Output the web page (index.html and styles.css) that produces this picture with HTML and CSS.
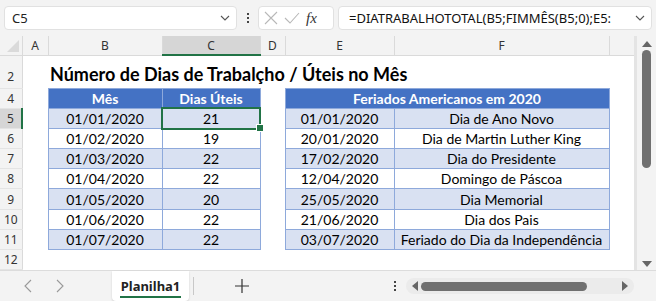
FILE: index.html
```html
<!DOCTYPE html>
<html lang="pt">
<head>
  <meta charset="UTF-8">
  <title>Planilha1</title>
  <link rel="stylesheet" href="styles.css">
</head>
<body>
  <div class="formula-bar">
    <div class="name-box">
      <span>C5</span>
      <svg class="chev" width="10" height="6" viewBox="0 0 10 6"><path d="M1 1l4 4 4-4" fill="none" stroke="#555" stroke-width="1.1"/></svg>
    </div>
    <div class="vdots"><i></i><i></i><i></i></div>
    <div class="fx-buttons">
      <svg width="14" height="14" viewBox="0 0 14 14"><path d="M1 1l12 12M13 1L1 13" stroke="#b8b8b8" stroke-width="1.1"/></svg>
      <svg width="16" height="14" viewBox="0 0 16 14"><path d="M1 7l5 5L15 2" fill="none" stroke="#b8b8b8" stroke-width="1.1"/></svg>
      <span class="fx">fx</span>
    </div>
    <div class="formula-box">
      <span>=DIATRABALHOTOTAL(B5;FIMMÊS(B5;0);E5:</span>
      <svg class="chev" width="10" height="6" viewBox="0 0 10 6"><path d="M1 1l4 4 4-4" fill="none" stroke="#555" stroke-width="1.1"/></svg>
    </div>
  </div>

  <div class="workspace">
    <table class="sheet">
      <colgroup>
        <col class="c-rh"><col class="c-a"><col class="c-b"><col class="c-c"><col class="c-d"><col class="c-e"><col class="c-f"><col>
      </colgroup>
      <tr class="col-heads">
        <th class="corner"><span class="tri"></span></th><th>A</th><th>B</th><th class="sel">C</th><th>D</th><th>E</th><th>F</th><th></th>
      </tr>
      <tr class="title-row">
        <th class="rh">2</th><td></td><td colspan="5" class="title">Número de Dias de Trabalçho / Úteis no Mês</td><td></td>
      </tr>
      <tr>
        <th class="rh">4</th><td></td><td class="hd">Mês</td><td class="hd">Dias Úteis</td><td></td><td class="hd" colspan="2">Feriados Americanos em 2020</td><td></td>
      </tr>
      <tr class="band">
        <th class="rh rsel">5</th><td></td><td class="t">01/01/2020</td><td class="t active">21</td><td></td><td class="t">01/01/2020</td><td class="t">Dia de Ano Novo</td><td></td>
      </tr>
      <tr>
        <th class="rh">6</th><td></td><td class="t">01/02/2020</td><td class="t">19</td><td></td><td class="t">20/01/2020</td><td class="t">Dia de Martin Luther King</td><td></td>
      </tr>
      <tr class="band">
        <th class="rh">7</th><td></td><td class="t">01/03/2020</td><td class="t">22</td><td></td><td class="t">17/02/2020</td><td class="t">Dia do Presidente</td><td></td>
      </tr>
      <tr>
        <th class="rh">8</th><td></td><td class="t">01/04/2020</td><td class="t">22</td><td></td><td class="t">12/04/2020</td><td class="t">Domingo de Páscoa</td><td></td>
      </tr>
      <tr class="band">
        <th class="rh">9</th><td></td><td class="t">01/05/2020</td><td class="t">20</td><td></td><td class="t">25/05/2020</td><td class="t">Dia Memorial</td><td></td>
      </tr>
      <tr>
        <th class="rh">10</th><td></td><td class="t">01/06/2020</td><td class="t">22</td><td></td><td class="t">21/06/2020</td><td class="t">Dia dos Pais</td><td></td>
      </tr>
      <tr class="band">
        <th class="rh">11</th><td></td><td class="t">01/07/2020</td><td class="t">22</td><td></td><td class="t">03/07/2020</td><td class="t">Feriado do Dia da Independência</td><td></td>
      </tr>
      <tr>
        <th class="rh">12</th><td></td><td></td><td></td><td></td><td></td><td></td><td></td>
      </tr>
    </table>
    <div class="vscroll">
      <span class="arr up"></span>
      <div class="vthumb"></div>
      <span class="arr down"></span>
    </div>
  </div>

  <div class="tab-bar">
    <div class="nav">
      <svg width="8" height="14" viewBox="0 0 8 14"><path d="M7 1L1 7l6 6" fill="none" stroke="#999" stroke-width="1.1"/></svg>
      <svg width="8" height="14" viewBox="0 0 8 14"><path d="M1 1l6 6-6 6" fill="none" stroke="#999" stroke-width="1.1"/></svg>
    </div>
    <div class="tab">Planilha1</div>
    <div class="tab-sep"></div>
    <div class="add">
      <svg width="14" height="14" viewBox="0 0 14 14"><path d="M7 0v14M0 7h14" stroke="#333" stroke-width="1.2"/></svg>
    </div>
    <div class="vdots small"><i></i><i></i><i></i></div>
    <div class="hscroll">
      <span class="harr left"></span>
      <div class="hthumb"></div>
      <span class="harr right"></span>
    </div>
  </div>
</body>
</html>
```

FILE: styles.css
```css
* {
  box-sizing: border-box;
}

body {
  margin: 0;
  width: 656px;
  height: 301px;
  overflow: hidden;
  background: #f3f3f3;
  font-family: "Noto Sans", sans-serif;
}

/* formula bar */
.formula-bar {
  display: flex;
  align-items: center;
  height: 36px;
  padding: 4px 4px 4px 4px;
  gap: 0;
}

.name-box {
  width: 233px;
  height: 24px;
  background: #fff;
  border: 1px solid #e1e1e1;
  border-radius: 4px;
  display: flex;
  align-items: center;
  justify-content: space-between;
  padding: 0 6px 0 7px;
  font-size: 13px;
  color: #222;
}

.vdots {
  width: 21px;
  display: flex;
  flex-direction: column;
  align-items: center;
  gap: 2px;
}

.vdots i {
  width: 2px;
  height: 2px;
  background: #444;
}

.fx-buttons {
  width: 76px;
  height: 24px;
  background: #fff;
  border: 1px solid #e1e1e1;
  border-radius: 4px;
  display: flex;
  align-items: center;
  gap: 6px;
  padding-left: 5px;
}

.fx {
  font-family: "Liberation Serif", serif;
  font-style: italic;
  font-size: 15px;
  color: #333;
}

.formula-box {
  flex: 1;
  margin-left: 4px;
  height: 24px;
  background: #fff;
  border: 1px solid #e1e1e1;
  border-radius: 4px;
  display: flex;
  align-items: center;
  justify-content: space-between;
  padding: 0 6px 0 10px;
  font-size: 13px;
  color: #111;
}

/* grid */
.workspace {
  display: flex;
  height: 235px;
  border-bottom: 1px solid #dcdcdc;
}

.sheet {
  width: 637px;
  border-collapse: collapse;
  table-layout: fixed;
  background: #fff;
  font-family: Lato, sans-serif;
  font-size: 14px;
  color: #000;
  border-right: 3px solid #e4e4e4;
}

.c-rh { width: 22px; }
.c-a { width: 26px; }
.c-b { width: 114px; }
.c-c { width: 98px; }
.c-d { width: 25px; }
.c-e { width: 109px; }
.c-f { width: 215px; }

.sheet td,
.sheet th {
  padding: 0;
  height: 20px;
  text-align: center;
  white-space: nowrap;
  overflow: visible;
}

.col-heads th {
  height: 19px;
  background: #f3f3f3;
  font-family: "Noto Sans", sans-serif;
  font-weight: normal;
  font-size: 12px;
  color: #333;
  border-right: 1px solid #dadada;
  border-bottom: 1px solid #dadada;
}

.col-heads th.sel {
  background: #d6d6d6;
  border-bottom: 2px solid #217346;
}

.corner {
  position: relative;
}

.tri {
  position: absolute;
  right: 3px;
  bottom: 3px;
  border-left: 12px solid transparent;
  border-bottom: 12px solid #dadada;
}

.rh {
  background: #f3f3f3;
  font-family: "Noto Sans", sans-serif;
  font-weight: normal;
  font-size: 12px;
  color: #333;
  border-right: 1px solid #dadada;
  border-bottom: 1px solid #e4e4e4;
}

.rh.rsel {
  background: #d6d6d6;
  border-right: 2px solid #217346;
}

.title-row td,
.title-row th {
  height: 33px;
  vertical-align: bottom;
  padding-bottom: 3px;
}

.title {
  text-align: left !important;
  padding-left: 2px !important;
  font-weight: bold;
  font-size: 18px;
}

.hd {
  background: #4472c4;
  color: #fff;
  font-weight: bold;
  border: 1px solid #8ea9db;
}

.t {
  border: 1px solid #8ea9db;
}

.band .t {
  background: #d9e1f2;
}

.active {
  position: relative;
  outline: 2px solid #217346;
  outline-offset: -1px;
}

.active::after {
  content: "";
  position: absolute;
  right: -4px;
  bottom: -4px;
  width: 6px;
  height: 6px;
  background: #217346;
  border: 1px solid #fff;
}

/* vertical scrollbar */
.vscroll {
  width: 19px;
  display: flex;
  flex-direction: column;
  align-items: center;
  padding: 5px 0 3px;
}

.arr {
  width: 0;
  height: 0;
  border-left: 5px solid transparent;
  border-right: 5px solid transparent;
}

.arr.up {
  border-bottom: 6px solid #666;
}

.arr.down {
  margin-top: auto;
  border-top: 6px solid #666;
}

.vthumb {
  margin-top: 3px;
  width: 9px;
  height: 118px;
  background: #707070;
  border-radius: 5px;
}

/* sheet tabs */
.tab-bar {
  display: flex;
  align-items: center;
  height: 30px;
}

.nav {
  width: 112px;
  display: flex;
  gap: 24px;
  padding-left: 24px;
}

.tab {
  width: 77px;
  height: 30px;
  background: #fff;
  border-radius: 0 0 4px 4px;
  box-shadow: 0 1px 2px rgba(0, 0, 0, 0.15);
  display: flex;
  align-items: center;
  justify-content: center;
  font-family: "Noto Sans", sans-serif;
  font-weight: bold;
  font-size: 13px;
  color: #222;
  position: relative;
}

.tab::after {
  content: "";
  position: absolute;
  left: 8px;
  right: 8px;
  bottom: 3px;
  height: 2px;
  background: #217346;
}

.tab-sep {
  width: 1px;
  height: 18px;
  background: #c8c8c8;
  margin-left: 4px;
}

.add {
  width: 96px;
  display: flex;
  justify-content: center;
}

.vdots.small {
  width: 16px;
  margin-left: 97px;
}

.hscroll {
  margin-left: 3px;
  width: 228px;
  height: 16px;
  background: #ebebeb;
  border-radius: 8px;
  display: flex;
  align-items: center;
  padding: 0 6px 0 6px;
}

.harr {
  width: 0;
  height: 0;
  border-top: 5px solid transparent;
  border-bottom: 5px solid transparent;
}

.harr.left {
  border-right: 6px solid #666;
}

.harr.right {
  margin-left: auto;
  border-left: 6px solid #666;
}

.hthumb {
  margin-left: 3px;
  width: 166px;
  height: 9px;
  background: #707070;
  border-radius: 5px;
}
```
